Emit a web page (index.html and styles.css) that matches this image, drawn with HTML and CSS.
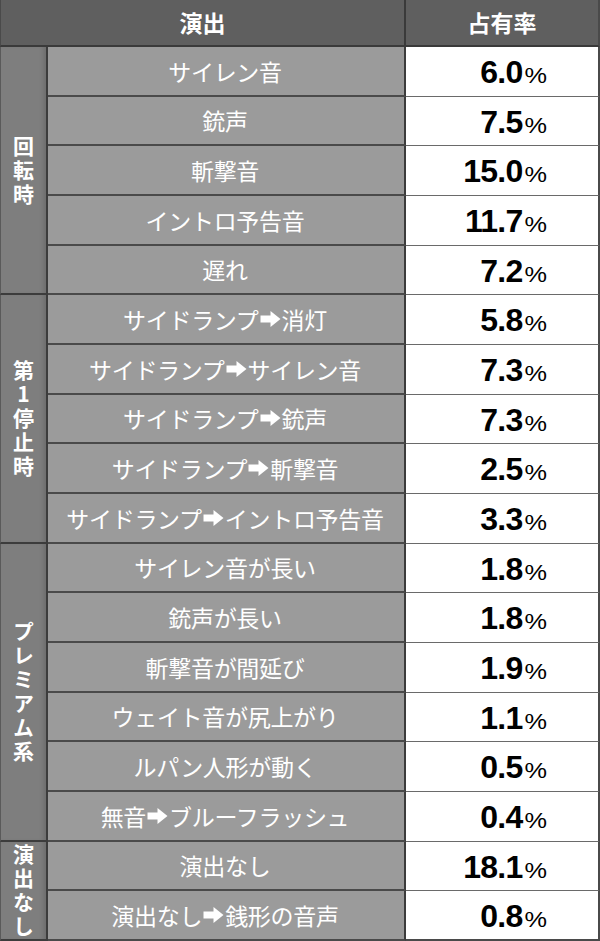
FILE: index.html
```html
<!DOCTYPE html>
<html lang="ja">
<head>
<meta charset="utf-8">
<link rel="stylesheet" href="styles.css">
</head>
<body>
<div class="tbl">
  <div class="hd hd-main">演出</div>
  <div class="hd hd-rate">占有率</div>

  <div class="grp span5"><span class="vt">回転時</span></div>
  <div class="name">サイレン音</div><div class="rate">6.0<small>%</small></div>
  <div class="name">銃声</div><div class="rate">7.5<small>%</small></div>
  <div class="name">斬撃音</div><div class="rate">15.0<small>%</small></div>
  <div class="name">イントロ予告音</div><div class="rate">11.7<small>%</small></div>
  <div class="name">遅れ</div><div class="rate">7.2<small>%</small></div>

  <div class="grp span5"><span class="vt">第1停止時</span></div>
  <div class="name">サイドランプ<svg class="arr" viewBox="0 0 20 16"><path d="M0 4.5h10V0l10 8-10 8v-4.5H0z"/></svg>消灯</div><div class="rate">5.8<small>%</small></div>
  <div class="name">サイドランプ<svg class="arr" viewBox="0 0 20 16"><path d="M0 4.5h10V0l10 8-10 8v-4.5H0z"/></svg>サイレン音</div><div class="rate">7.3<small>%</small></div>
  <div class="name">サイドランプ<svg class="arr" viewBox="0 0 20 16"><path d="M0 4.5h10V0l10 8-10 8v-4.5H0z"/></svg>銃声</div><div class="rate">7.3<small>%</small></div>
  <div class="name">サイドランプ<svg class="arr" viewBox="0 0 20 16"><path d="M0 4.5h10V0l10 8-10 8v-4.5H0z"/></svg>斬撃音</div><div class="rate">2.5<small>%</small></div>
  <div class="name">サイドランプ<svg class="arr" viewBox="0 0 20 16"><path d="M0 4.5h10V0l10 8-10 8v-4.5H0z"/></svg>イントロ予告音</div><div class="rate">3.3<small>%</small></div>

  <div class="grp span6"><span class="vt">プレミアム系</span></div>
  <div class="name">サイレン音が長い</div><div class="rate">1.8<small>%</small></div>
  <div class="name">銃声が長い</div><div class="rate">1.8<small>%</small></div>
  <div class="name">斬撃音が間延び</div><div class="rate">1.9<small>%</small></div>
  <div class="name">ウェイト音が尻上がり</div><div class="rate">1.1<small>%</small></div>
  <div class="name">ルパン人形が動く</div><div class="rate">0.5<small>%</small></div>
  <div class="name">無音<svg class="arr" viewBox="0 0 20 16"><path d="M0 4.5h10V0l10 8-10 8v-4.5H0z"/></svg>ブルーフラッシュ</div><div class="rate">0.4<small>%</small></div>

  <div class="grp span2"><span class="vt">演出なし</span></div>
  <div class="name">演出なし</div><div class="rate">18.1<small>%</small></div>
  <div class="name">演出なし<svg class="arr" viewBox="0 0 20 16"><path d="M0 4.5h10V0l10 8-10 8v-4.5H0z"/></svg>銭形の音声</div><div class="rate">0.8<small>%</small></div>
</div>
</body>
</html>
```

FILE: styles.css
```css
* { box-sizing: border-box; }
html, body { margin: 0; padding: 0; background: #fff; }
body { width: 600px; height: 941px; overflow: hidden; }

.tbl {
  width: 600px;
  height: 941px;
  display: grid;
  grid-template-columns: 48px 358px 194px;
  grid-template-rows: 47px repeat(18, 1fr);
  font-family: "Noto Sans CJK JP", "Noto Sans", sans-serif;
}

.hd {
  background: #5f5f5f;
  color: #fff;
  font-weight: 700;
  font-size: 23px;
  display: flex;
  align-items: center;
  justify-content: center;
  border-bottom: 2px solid #3a3a3a;
  padding-bottom: 2px;
}
.hd-main { grid-column: 1 / 3; border-right: 2px solid #3a3a3a; border-left: 1px solid #4a4a4a; }
.hd-rate { grid-column: 3; border-right: 2px solid #4a4a4a; }

.grp {
  grid-column: 1;
  background: #7e7e7e;
  box-shadow: inset -5px 0 4px -2px rgba(0,0,0,0.12);
  border-right: 2px solid #3c3c3c;
  border-bottom: 2px solid #3c3c3c;
  border-left: 1px solid #5a5a5a;
  display: flex;
  align-items: center;
  justify-content: center;
  color: #fff;
  font-weight: 700;
  font-size: 21px;
  overflow: hidden;
}
.span5 { grid-row: span 5; }
.span6 { grid-row: span 6; }
.span2 { grid-row: span 2; }

.vt {
  writing-mode: vertical-rl;
  text-orientation: upright;
  white-space: nowrap;
  letter-spacing: 3px;
  line-height: 24px;
  margin-top: 3px;
}

.name {
  grid-column: 2;
  background: #9b9b9b;
  color: #fff;
  font-size: 23px;
  display: flex;
  align-items: center;
  justify-content: center;
  border-right: 2px solid #3c3c3c;
  border-bottom: 2px solid #4a4a4a;
  padding-right: 2px;
  white-space: nowrap;
  letter-spacing: -0.3px;
}

.arr {
  width: 21px;
  height: 16px;
  fill: #fff;
  margin: 0 1px;
}

.rate {
  grid-column: 3;
  background: #fff;
  color: #000;
  font-family: "Liberation Sans", Arial, sans-serif;
  font-weight: 700;
  font-size: 32px;
  display: flex;
  align-items: baseline;
  justify-content: flex-end;
  padding-right: 50px;
  padding-top: 7px;
  border-bottom: 1px solid #6a6a6a;
  border-right: 2px solid #4a4a4a;
  letter-spacing: -0.8px;
}
.rate small {
  display: inline-block;
  font-size: 22px;
  font-weight: 400;
  margin-left: 4px;
  margin-right: 2px;
  letter-spacing: 0;
  transform: scaleX(1.15);
}
.tbl > .rate:last-child { border-bottom: 2px solid #4a4a4a; }
```
